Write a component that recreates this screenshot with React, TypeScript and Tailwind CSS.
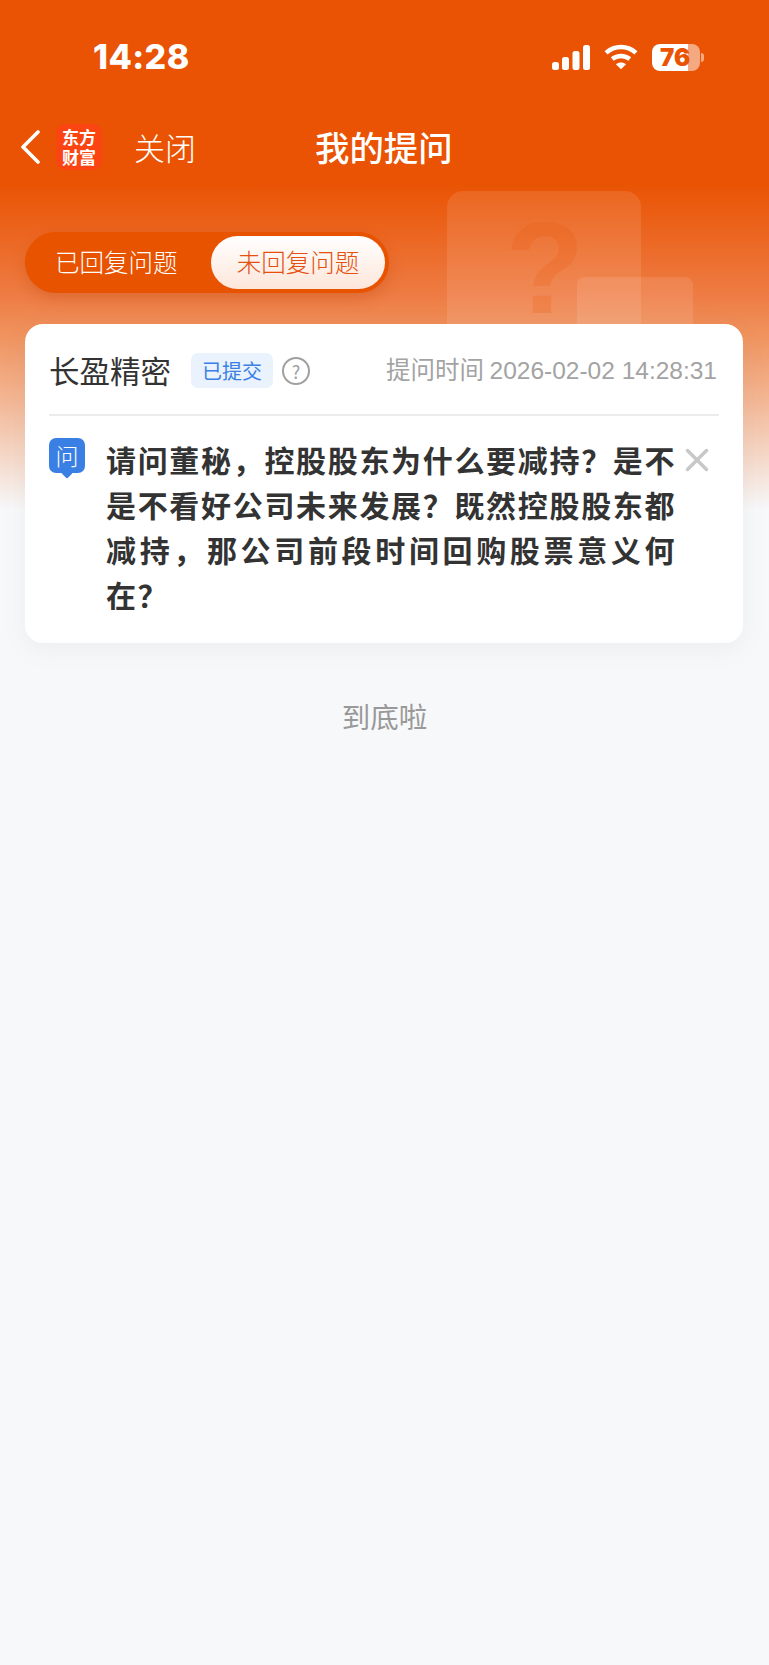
import React from "react";
import { X } from "lucide-react";

const Signal = () => (
  <svg width="38" height="25" viewBox="0 0 38 25" fill="#fff">
    <rect x="0" y="17" width="7" height="8" rx="2.5" />
    <rect x="10" y="12" width="7" height="13" rx="2.5" />
    <rect x="20.5" y="6" width="7" height="19" rx="2.5" />
    <rect x="31" y="0" width="7" height="25" rx="2.5" />
  </svg>
);

const Wifi = () => (
  <svg width="34" height="26" viewBox="0 0 33 25" fill="none" stroke="#fff" strokeWidth="4.4">
    <path d="M2 8.5C10.5 1 22.5 1 31 8.5" />
    <path d="M8 14.5C13 10.5 20 10.5 25 14.5" />
    <path d="M16.5 24.5L11.6 19.6C14.5 17.4 18.5 17.4 21.4 19.6Z" fill="#fff" stroke="none" />
  </svg>
);

const Battery = () => (
  <div className="flex items-center gap-[1px]">
    <div className="relative flex h-[27px] w-[48px] overflow-hidden rounded-[8px]">
      <div className="w-[36px] bg-white" />
      <div className="flex-1 bg-white/50" />
      <span className="absolute left-[8px] top-0 font-['Inter',sans-serif] text-[24px] font-black leading-[27px] text-[#e95303]">
        76
      </span>
    </div>
    <div className="h-[9px] w-[3px] rounded-r-full bg-white/50" />
  </div>
);

const BackArrow = () => (
  <svg width="20" height="34" viewBox="0 0 20 34" fill="none" stroke="#fff" strokeWidth="3.6" strokeLinecap="round" strokeLinejoin="round">
    <path d="M18 2L3 17L18 32" />
  </svg>
);

const App = () => {
  return (
    <div className="relative min-h-screen overflow-hidden bg-[#f7f8fa] font-['Noto_Sans_CJK_SC',sans-serif]">
      {/* header wash */}
      <div className="absolute inset-x-0 top-0 h-[510px] bg-[linear-gradient(180deg,#e95303_0%,#e95303_36%,#ee7c44_58%,#f0945f_66%,#f3b592_78%,#f7f8fa_100%)]" />
      {/* question mark illustration */}
      <div className="absolute left-[447px] top-[191px] h-[150px] w-[194px] rounded-[16px] bg-white/10" />
      <div className="absolute left-[505px] top-[203px] font-['Liberation_Sans',sans-serif] text-[130px] font-bold leading-[130px] text-[#e95303]/20">
        ?
      </div>
      <div className="absolute left-[577px] top-[277px] h-[60px] w-[116px] rounded-[8px] bg-white/10" />

      <div className="relative flex flex-col">
        {/* status bar */}
        <div className="flex h-[114px] items-center justify-between pl-[93px] pr-[65px]">
          <span className="font-['Inter',sans-serif] text-[34px] font-extrabold leading-none tracking-[0.4px] text-white">14:28</span>
          <div className="flex items-center gap-[14px]">
            <Signal />
            <Wifi />
            <Battery />
          </div>
        </div>

        {/* nav */}
        <div className="relative flex h-[66px] items-center pl-[20px]">
          <BackArrow />
          <div className="ml-[16px] flex h-[46px] w-[46px] flex-col items-center justify-center rounded-[9px] bg-[#fa4512] text-[17px] font-bold leading-[20px] text-white">
            <span>东方</span>
            <span>财富</span>
          </div>
          <span className="-mt-[2px] ml-[32px] text-[31px] font-light leading-none text-white">关闭</span>
          <span className="absolute left-[315px] -mt-[2px] text-[34.4px] font-medium leading-none text-white">我的提问</span>
        </div>

        {/* tabs */}
        <div className="ml-[25px] mt-[52px] flex h-[61px] w-[364px] items-center rounded-full bg-[#e85300] pr-[4px] shadow-[0_6px_14px_rgba(190,70,10,0.3)]">
          <div className="flex-1 pl-[30px] text-[24.5px] font-light text-white">已回复问题</div>
          <div className="flex h-[53px] w-[174px] items-center justify-center rounded-full bg-gradient-to-b from-white to-[#fde6da] text-[24.5px] font-light text-[#e5500f]">
            未回复问题
          </div>
        </div>

        {/* question card */}
        <div className="ml-[25px] mr-[26px] mt-[31px] h-[319px] rounded-[18px] bg-white px-[24px] shadow-[0_6px_24px_rgba(120,120,120,0.08)]">
          <div className="flex h-[92px] items-center border-b-2 border-[#ececec] pt-[2px]">
            <span className="text-[30.5px] leading-none text-[#333]">长盈精密</span>
            <span className="ml-[20px] mt-[1px] flex h-[35px] w-[82px] items-center justify-center rounded-[7px] bg-[#e9f2fd] text-[20px] leading-none text-[#3a80e4]">
              已提交
            </span>
            <span className="ml-[9px] mt-[2px] flex h-[28px] w-[28px] items-center justify-center rounded-full border-2 border-[#a0a0a0] text-[18px] leading-none text-[#a0a0a0]">
              ?
            </span>
            <span className="ml-auto whitespace-nowrap pr-[2px] text-[24.5px] leading-none text-[#a3a3a3]">
              提问时间 <span className="font-['Liberation_Sans',sans-serif]">2026-02-02 14:28:31</span>
            </span>
          </div>
          <div className="flex pt-[21px]">
            <div className="relative mt-[1px] h-[35px] w-[36px] shrink-0 rounded-[7px] bg-[#3a80e4] text-center text-[23px] font-light leading-[34px] text-white">
              问
              <div className="absolute left-[14px] top-[31px] h-[8px] w-[8px] rotate-45 rounded-[1px] bg-[#3a80e4]" />
            </div>
            <p className="ml-[21px] w-[570px] shrink-0 text-justify text-[30px] font-bold leading-[45px] tracking-[1.5px] text-[#333]">
              请问董秘，控股股东为什么要减持？是不是不看好公司未来发展？既然控股股东都减持，那公司前段时间回购股票意义何在？
            </p>
            <X className="ml-[2px] mt-[4px] h-[38px] w-[38px] shrink-0 text-[#c8c8c8]" strokeWidth={2.2} />
          </div>
        </div>

        <div className="mt-[54px] text-center text-[28.5px] leading-[38px] text-[#999]">到底啦</div>
      </div>
    </div>
  );
};

export default App;
